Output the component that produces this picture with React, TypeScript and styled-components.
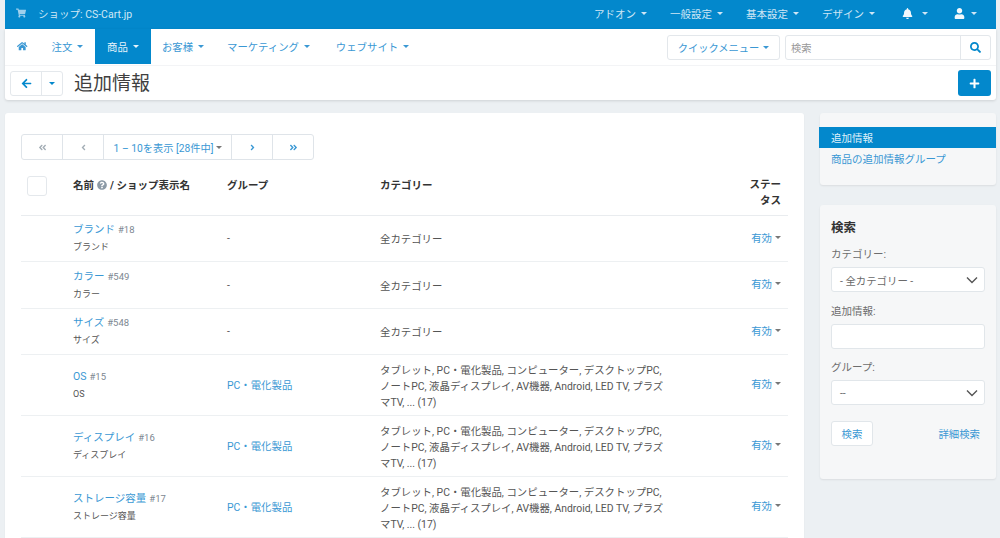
import React from "react";
import styled, { createGlobalStyle } from "styled-components";
import { FaShoppingCart, FaHome, FaBell, FaUser, FaArrowLeft, FaSearch, FaPlus, FaQuestionCircle, FaAngleDoubleLeft, FaAngleDoubleRight, FaAngleLeft, FaAngleRight } from "react-icons/fa";

const blue = "#0388cc";
const link = "#3a98d4";

const Global = createGlobalStyle`
  html, body { margin: 0; padding: 0; background: #ecf0f3; height: 538px; overflow: hidden; }
  body { font-family: Roboto, "Noto Sans CJK JP", sans-serif; font-size: 11px; color: #444; }
  * { box-sizing: border-box; }
`;

const Page = styled.div`
  width: 1000px; height: 538px; overflow: hidden; padding: 0 4px 0 5px;
`;
const TopBar = styled.div`
  height: 29px; background: ${blue}; display: flex; align-items: center; color: #cfe7f5;
  padding: 0 0 3px 11px; font-size: 10.5px;
`;
const ShopName = styled.div`
  display: flex; align-items: center; gap: 12px; flex: 1;
  svg { font-size: 10px; color: #9fd0ec; }
`;
const TopMenu = styled.div`
  display: flex; align-items: center; margin-right: 12px; width: 390px;
`;
const TopItem = styled.div<{ $w: number; $gap?: number }>`
  width: ${(p) => p.$w}px; display: flex; align-items: center; gap: ${(p) => p.$gap ?? 5}px; white-space: nowrap; font-size: 10.5px; color: #cfe6f5;
  svg { color: #f2f8fc; font-size: 11px; }
`;
const Caret = styled.span<{ $c?: string }>`
  display: inline-block; width: 0; height: 0; border-left: 3px solid transparent; border-right: 3px solid transparent;
  border-top: 3px solid ${(p) => p.$c || "currentColor"};
`;
const Header = styled.div`
  background: #fff; height: 71px; border-radius: 0 0 3px 3px; box-shadow: 0 1px 3px rgba(0,0,0,.13);
`;
const NavRow = styled.div`
  height: 37px; display: flex; border-bottom: 1px solid #f3f4f6; padding-top: 1px;
`;
const NavItems = styled.div`display: flex; flex: 1;`;
const NavItem = styled.div<{ $active?: boolean; $w: number }>`
  width: ${(p) => p.$w}px; display: flex; align-items: center; justify-content: center; gap: 5px; white-space: nowrap;
  font-size: 10.4px; background: ${(p) => (p.$active ? blue : "transparent")}; color: ${(p) => (p.$active ? "#e6f3fb" : link)};
  margin-top: ${(p) => (p.$active ? "-1px" : "0")}; height: ${(p) => (p.$active ? "35px" : "33px")};
`;
const NavTools = styled.div`display: flex; align-items: flex-start; gap: 5px; padding: 5px 5px 0 0;`;
const QuickButton = styled.div`
  width: 113px; height: 25px; border: 1px solid #e3e7eb; border-radius: 3px; display: flex; align-items: center; justify-content: center; gap: 4px;
  color: ${link}; font-size: 10.25px; white-space: nowrap;
`;
const SearchBox = styled.div`
  width: 206px; height: 25px; border: 1px solid #e3e7eb; border-radius: 3px; display: flex; align-items: center; color: #999; font-size: 10.25px;
`;
const SearchText = styled.div`flex: 1; padding-left: 5px;`;
const SearchButton = styled.div`
  width: 30px; height: 100%; border-left: 1px solid #e3e7eb; display: flex; align-items: center; justify-content: center; color: ${blue}; font-size: 11px;
`;
const TitleRow = styled.div`display: flex; align-items: center; padding: 0 5px 0 5px; height: 34px;`;
const BackGroup = styled.div`
  width: 53px; height: 25px; border: 1px solid #e4e8ec; border-radius: 3px; display: flex; margin-right: 11px; color: ${blue};
`;
const BackArrow = styled.div`flex: 1; display: flex; align-items: center; justify-content: center; font-size: 11px; border-right: 1px solid #e4e8ec;`;
const BackCaret = styled.div`width: 20px; display: flex; align-items: center; justify-content: center;`;
const Title = styled.h1`margin: 0; font-weight: 400; font-size: 19px; color: #3f3f3f; flex: 1; line-height: 25px;`;
const AddButton = styled.div`
  width: 33px; height: 26px; background: ${blue}; border-radius: 3px; color: #fff; display: flex; align-items: center; justify-content: center; font-size: 11px;
`;
const Columns = styled.div`display: flex; gap: 16px; padding-top: 13px; align-items: flex-start;`;
const Main = styled.div`
  width: 799px; height: 440px; background: #fff; border-radius: 3px; padding: 21px 16px 0 16px; box-shadow: 0 1px 2px rgba(0,0,0,.05);
`;
const Pager = styled.div`display: flex; height: 26px; width: 293px;`;
const PageBtn = styled.div<{ $blue?: boolean }>`
  width: 42px; border: 1px solid #dfe4e9; margin-left: -1px; display: flex; align-items: center; justify-content: center; font-size: 9px;
  color: ${(p) => (p.$blue ? link : "#a3adb5")};
  &:first-child { margin-left: 0; border-radius: 3px 0 0 3px; }
  &:last-child { border-radius: 0 3px 3px 0; }
`;
const PageInfo = styled.div`
  flex: 1; border-top: 1px solid #dfe4e9; border-bottom: 1px solid #dfe4e9; display: flex; align-items: center; justify-content: center; gap: 3px;
  color: ${link}; font-size: 10.25px; white-space: nowrap;
`;
const Row = styled.div<{ $h: number }>`
  display: grid; grid-template-columns: 52px 154px 153px 1fr 80px; height: ${(p) => p.$h}px; align-items: center; border-bottom: 1px solid #edf0f2;
`;
const HeadRow = styled(Row)`align-items: flex-start; padding-top: 12px; font-weight: 700; color: #333; font-size: 10.5px; border-bottom-color: #e9ecef;`;
const Check = styled.div`width: 20px; height: 20px; margin: 4px 0 0 6px; border: 1px solid #e4e8ec; border-radius: 3px;`;
const HeadName = styled.div`display: flex; align-items: center; gap: 3px; padding-top: 5px; white-space: nowrap; svg { color: #8c9aa6; font-size: 10px; }`;
const HeadCell = styled.div`padding-top: 5px;`;
const HeadStatus = styled.div`text-align: right; padding: 5px 7px 0 0; line-height: 16px;`;
const NameCell = styled.div`line-height: 16px;`;
const NameLink = styled.span`color: ${link}; font-size: 10.5px;`;
const IdTag = styled.span`color: #7d8791; font-size: 9.5px; margin-left: 3px;`;
const SubName = styled.div`color: #555; font-size: 9px; margin-top: 1px;`;
const Group = styled.div<{ $link?: boolean }>`color: ${(p) => (p.$link ? link : "#555")}; font-size: 10.4px; margin-top: ${(p) => (p.$link ? "-2px" : "0")};`;
const Cats = styled.div`color: #555; font-size: 10.4px; line-height: 16px; width: 290px; white-space: pre-line; padding-top: 3px;`;
const Status = styled.div`display: flex; justify-content: flex-end; align-items: center; gap: 3px; padding-right: 7px; color: ${link}; font-size: 10.4px; margin-top: -3px;`;
const Side = styled.div`width: 176px; display: flex; flex-direction: column; gap: 20px;`;
const SideCard = styled.div<{ $h: number }>`
  background: #f6f7f8; border-radius: 3px; height: ${(p) => p.$h}px; box-shadow: 0 1px 2px rgba(0,0,0,.08);
`;
const NavList = styled(SideCard)`padding-top: 14px;`;
const SideActive = styled.div`height: 21px; margin-left: -1px; background: ${blue}; color: #dff0fa; display: flex; align-items: center; padding-left: 12px; font-size: 10.5px;`;
const SideLink = styled.div`color: ${link}; padding-left: 11px; height: 21px; font-size: 10.5px; display: flex; align-items: center;`;
const SearchCard = styled(SideCard)`padding: 14px 11px 0 11px;`;
const SearchTitle = styled.div`font-size: 12.5px; font-weight: 700; color: #333; height: 18px; line-height: 18px; margin-bottom: 9px;`;
const Label = styled.div`color: #6d6d6d; font-size: 10.5px; height: 21px; line-height: 18px;`;
const Field = styled.div`
  height: 25px; background: #fff; border: 1px solid #e1e6ea; border-radius: 3px; display: flex; align-items: center; justify-content: space-between;
  padding: 1px 5px 0 8px; color: #6a6a6a; font-size: 10.4px; margin-bottom: 10.5px;
`;
const Actions = styled.div`display: flex; justify-content: space-between; align-items: center; margin-top: 16px; padding-right: 5px;`;
const SearchBtn = styled.div`
  width: 42px; height: 25px; background: #fff; border: 1px solid #e1e6ea; border-radius: 3px; color: ${link}; display: flex; align-items: center; justify-content: center; font-size: 10.4px;
`;
const AdvLink = styled.div`color: ${link}; font-size: 10.4px;`;

const Chevron = () => (
  <svg width="14" height="14" viewBox="0 0 14 14" fill="none" stroke="#555" strokeWidth="1.4" aria-hidden>
    <path d="M2 4.5l5 5 5-5" />
  </svg>
);

const catsLong = "タブレット, PC・電化製品, コンピューター, デスクトップPC,\nノートPC, 液晶ディスプレイ, AV機器, Android, LED TV, プラズ\nマTV, ... (17)";

const rows = [
  { n: "ブランド", id: "#18", s: "ブランド", h: 46 },
  { n: "カラー", id: "#549", s: "カラー", h: 47 },
  { n: "サイズ", id: "#548", s: "サイズ", h: 46 },
  { n: "OS", id: "#15", s: "OS", h: 61, long: true },
  { n: "ディスプレイ", id: "#16", s: "ディスプレイ", h: 61, long: true },
  { n: "ストレージ容量", id: "#17", s: "ストレージ容量", h: 61, long: true },
];

export default function App() {
  return (
    <Page>
      <Global />
      <TopBar>
        <ShopName><FaShoppingCart /><span>ショップ: CS-Cart.jp</span></ShopName>
        <TopMenu>
          <TopItem $w={76}>アドオン <Caret /></TopItem>
          <TopItem $w={76}>一般設定 <Caret /></TopItem>
          <TopItem $w={76}>基本設定 <Caret /></TopItem>
          <TopItem $w={80}>デザイン <Caret /></TopItem>
          <TopItem $w={52} $gap={9}><FaBell /><Caret /></TopItem>
          <TopItem $w={30} $gap={6}><FaUser /><Caret /></TopItem>
        </TopMenu>
      </TopBar>
      <Header>
        <NavRow>
          <NavItems>
            <NavItem $w={35}><FaHome /></NavItem>
            <NavItem $w={55}>注文 <Caret /></NavItem>
            <NavItem $w={56} $active>商品 <Caret /></NavItem>
            <NavItem $w={64}>お客様 <Caret /></NavItem>
            <NavItem $w={107}>マーケティング <Caret /></NavItem>
            <NavItem $w={101}>ウェブサイト <Caret /></NavItem>
          </NavItems>
          <NavTools>
            <QuickButton>クイックメニュー <Caret /></QuickButton>
            <SearchBox>
              <SearchText>検索</SearchText>
              <SearchButton><FaSearch /></SearchButton>
            </SearchBox>
          </NavTools>
        </NavRow>
        <TitleRow>
          <BackGroup>
            <BackArrow><FaArrowLeft /></BackArrow>
            <BackCaret><Caret /></BackCaret>
          </BackGroup>
          <Title>追加情報</Title>
          <AddButton><FaPlus /></AddButton>
        </TitleRow>
      </Header>
      <Columns>
        <Main>
          <Pager>
            <PageBtn><FaAngleDoubleLeft /></PageBtn>
            <PageBtn><FaAngleLeft /></PageBtn>
            <PageInfo>1 – 10を表示 [28件中] <Caret $c="#777" /></PageInfo>
            <PageBtn $blue><FaAngleRight /></PageBtn>
            <PageBtn $blue><FaAngleDoubleRight /></PageBtn>
          </Pager>
          <HeadRow $h={56}>
            <Check />
            <HeadName>名前 <FaQuestionCircle /> / ショップ表示名</HeadName>
            <HeadCell>グループ</HeadCell>
            <HeadCell>カテゴリー</HeadCell>
            <HeadStatus>ステー<br />タス</HeadStatus>
          </HeadRow>
          {rows.map((r) => (
            <Row key={r.id} $h={r.h}>
              <div />
              <NameCell>
                <NameLink>{r.n}</NameLink><IdTag>{r.id}</IdTag>
                <SubName>{r.s}</SubName>
              </NameCell>
              <Group $link={r.long}>{r.long ? "PC・電化製品" : "-"}</Group>
              <Cats>{r.long ? catsLong : "全カテゴリー"}</Cats>
              <Status>有効 <Caret $c="#777" /></Status>
            </Row>
          ))}
        </Main>
        <Side>
          <NavList $h={72}>
            <SideActive>追加情報</SideActive>
            <SideLink>商品の追加情報グループ</SideLink>
          </NavList>
          <SearchCard $h={274}>
            <SearchTitle>検索</SearchTitle>
            <Label>カテゴリー:</Label>
            <Field>- 全カテゴリー -<Chevron /></Field>
            <Label>追加情報:</Label>
            <Field />
            <Label>グループ:</Label>
            <Field>--<Chevron /></Field>
            <Actions>
              <SearchBtn>検索</SearchBtn>
              <AdvLink>詳細検索</AdvLink>
            </Actions>
          </SearchCard>
        </Side>
      </Columns>
    </Page>
  );
}
